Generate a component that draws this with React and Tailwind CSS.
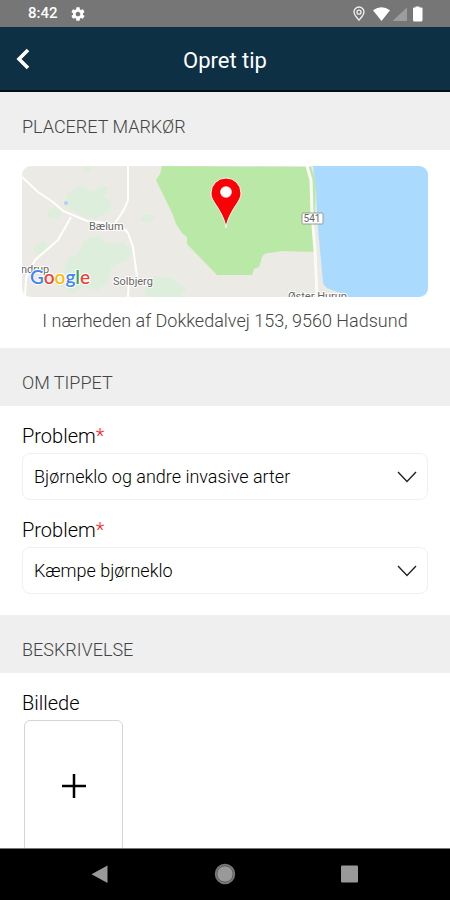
import React from "react";

function StatusBar() {
  return (
    <div className="flex h-[27px] shrink-0 items-center justify-between bg-[#767676] pr-[26px] pl-7 text-white">
      <div className="flex items-center gap-3">
        <span className="text-[15px] font-medium">8:42</span>
        <svg className="size-4" viewBox="0 0 24 24" fill="currentColor" aria-hidden="true">
          <path d="M19.43 12.98c.04-.32.07-.64.07-.98s-.03-.66-.07-.98l2.11-1.65c.19-.15.24-.42.12-.64l-2-3.46c-.12-.22-.39-.3-.61-.22l-2.49 1c-.52-.4-1.08-.73-1.69-.98l-.38-2.65C14.46 2.18 14.25 2 14 2h-4c-.25 0-.46.18-.49.42l-.38 2.65c-.61.25-1.17.59-1.69.98l-2.49-1c-.23-.09-.49 0-.61.22l-2 3.46c-.13.22-.07.49.12.64l2.11 1.65c-.04.32-.07.65-.07.98s.03.66.07.98l-2.11 1.65c-.19.15-.24.42-.12.64l2 3.46c.12.22.39.3.61.22l2.49-1c.52.4 1.08.73 1.69.98l.38 2.65c.03.24.24.42.49.42h4c.25 0 .46-.18.49-.42l.38-2.65c.61-.25 1.17-.59 1.69-.98l2.49 1c.23.09.49 0 .61-.22l2-3.46c.12-.22.07-.49-.12-.64l-2.11-1.65zM12 15.5c-1.93 0-3.5-1.57-3.5-3.5s1.57-3.5 3.5-3.5 3.5 1.57 3.5 3.5-1.57 3.5-3.5 3.5z" />
        </svg>
      </div>
      <svg className="h-4 w-[71px]" viewBox="0 0 71 16" fill="none" aria-hidden="true">
        <path d="M6 14.2C3.500 11 1 8.800 1 6a5 5 0 0 1 10 0c0 2.800-2.500 5-5 8.200Z" stroke="#f2f2f2" strokeWidth="1.300" />
        <circle cx="6" cy="6.200" r="2" stroke="#f2f2f2" strokeWidth="1.300" />
        <path d="M20 4.200Q28.500-1.600 37 4.200L28.500 15Z" fill="#fff" />
        <path d="M54 1.500V15H39.500Z" fill="#9d9d9d" />
        <path d="M62.500 1.500V.5h4v1h2q1 0 1 1V14q0 1.500-1.500 1.500h-6.500Q60 15.500 60 14V2.500q0-1 1-1Z" fill="#fff" />
      </svg>
    </div>
  );
}

function Header() {
  return (
    <header className="grid h-[65px] shrink-0 grid-cols-[48px_1fr_48px] items-center border-b-2 border-[#020d18] bg-[#0d3045] text-white">
      <button type="button" aria-label="Tilbage" className="flex h-full items-center pl-4">
        <svg className="h-[22px] w-4" viewBox="0 0 16 22" fill="none" aria-hidden="true">
          <path d="M12 2 3 11l9 9" stroke="currentColor" strokeWidth="3.600" />
        </svg>
      </button>
      <h1 className="pt-1 text-center text-[22px] leading-7">Opret tip</h1>
    </header>
  );
}

function SectionTitle({ children }) {
  return (
    <h2 className="flex h-[58px] items-center bg-[#efefef] px-[22px] pt-3 text-lg font-light text-[#444]">
      {children}
    </h2>
  );
}

function MapPreview() {
  return (
    <svg
      className="h-[131px] w-full rounded-[9px]"
      viewBox="0 0 406 131"
      preserveAspectRatio="xMidYMid slice"
      role="img"
      aria-label="Kort"
      fontFamily="Roboto, sans-serif"
    >
      <rect width="406" height="131" fill="#ebeae5" />
      <g fill="#deeedd">
        <path d="m44 28 15-9 12 7 7-6 8 1-4 10 8 5-3 10-14 7-13-3-15-9Z" />
        <path d="m64 73 13-4 6 7 20 1 8 8-5 9-17 7-2 14-11 9-14-3-11 6-15-8 6-12 4-15 9-4Z" />
        <path d="m132 110 18 2 14 11-6 8h-34l-1-9Z" />
        <path d="m120 50 8-2 5 4-7 5-8-2ZM61 1h9l-4 5-5-1ZM24 45l10-4 7 4-5 8-9-2ZM13 80l9-5 5 5-7 8-8-2Z" />
      </g>
      <circle cx="44" cy="37" r="2" fill="#a9d4fa" />
      <path d="m140 0-2 8-4 6 17 35 3 9 6 9 5 4v7l30 31h35l2-6 5-2 2-6q1-8 8-8l13-2 32 1 2-71-5-14Z" fill="#bae8a6" />
      <path d="M291 0h115v131h-81l-6-4-9-3q-9-3-9-8l-3-32-3-33-1-27Z" fill="#abdaff" />
      <g fill="none" stroke="#fff">
        <path d="m0 11 16 15 15 10 10 9 24 10 26 3q12 4 15 9l5 14 4 30M106 0v34q-3 10-13 23M49 51 36 74 13 94 4 112l-1 19M107 113l-1 18" strokeWidth="2" />
        <path d="m285 0 4 14 1 33 3 38 2 46" strokeWidth="3" stroke="#fbfaf4" />
      </g>
      <g fontSize="11" fill="#666" stroke="#fff" strokeWidth="2" strokeLinejoin="round" paintOrder="stroke">
        <text x="67" y="64">Bælum</text>
        <text x="91" y="119">Solbjerg</text>
        <text x="-1" y="107">ndrup</text>
        <text x="266" y="134">Øster Hurup</text>
      </g>
      <rect x="280" y="47" width="21" height="11" rx="1" fill="#fff" stroke="#999" />
      <text x="290" y="56" fontSize="10" textAnchor="middle" fill="#666">541</text>
      <text x="8" y="118" fontSize="19" fontWeight="600" fontFamily="Lato, sans-serif" stroke="#fff" strokeWidth="2" paintOrder="stroke">
        <tspan fill="#4285f4">G</tspan>
        <tspan fill="#ea4335">o</tspan>
        <tspan fill="#fbbc05">o</tspan>
        <tspan fill="#4285f4">g</tspan>
        <tspan fill="#34a853">l</tspan>
        <tspan fill="#ea4335">e</tspan>
      </text>
      <path d="M204 62c-1-8-4-13-8-20-4-6-7-10-7-15a15 15 0 0 1 30 0c0 5-3 9-7 15-4 7-7 12-8 20Z" fill="#fa0007" stroke="#f5fff0" strokeWidth="1" />
      <circle cx="204" cy="26" r="5.800" fill="#fff" />
    </svg>
  );
}

function SelectField({ id, option }) {
  return (
    <div className="flex flex-col">
      <label htmlFor={id} className="text-xl leading-6 font-light text-black">
        Problem<span className="text-[#ff1a1a]">*</span>
      </label>
      <div className="mt-[5px] grid items-center">
        <select
          id={id}
          className="col-start-1 row-start-1 h-[47px] w-full appearance-none rounded-lg border border-[#f0f0f0] bg-white px-[11px] text-lg font-light text-black"
        >
          <option>{option}</option>
        </select>
        <svg
          className="pointer-events-none col-start-1 row-start-1 mr-[11px] h-3 w-5 justify-self-end"
          viewBox="0 0 20 12"
          fill="none"
          aria-hidden="true"
        >
          <path d="m1 1 9 9.500L19 1" stroke="#222" strokeWidth="1.400" />
        </svg>
      </div>
    </div>
  );
}

function NavBar() {
  return (
    <nav className="flex h-[52px] shrink-0 items-center justify-center gap-[100px] border-t border-[#777] bg-black pb-0.5 text-[#999]">
      <button type="button" aria-label="Tilbage">
        <svg className="size-6" viewBox="0 0 24 24" fill="currentColor" aria-hidden="true">
          <path d="M18.500 3.500v17.500L2.500 12.200Z" />
        </svg>
      </button>
      <button type="button" aria-label="Hjem">
        <svg className="size-6" viewBox="0 0 24 24" aria-hidden="true">
          <circle cx="12" cy="12" r="9.500" fill="#999" stroke="#777" strokeWidth="1.500" />
          <circle cx="12" cy="12" r="8.200" fill="none" stroke="#444" strokeWidth=".8" />
        </svg>
      </button>
      <button type="button" aria-label="Seneste">
        <svg className="size-6" viewBox="0 0 24 24" fill="currentColor" aria-hidden="true">
          <rect x="4" y="3.500" width="17" height="17" rx="1" />
        </svg>
      </button>
    </nav>
  );
}

export default function App() {
  return (
    <div className="flex h-screen flex-col overflow-hidden bg-white font-['Roboto',sans-serif]">
      <StatusBar />
      <Header />
      <main className="min-h-0 flex-1 overflow-hidden">
        <section>
          <SectionTitle>PLACERET MARKØR</SectionTitle>
          <div className="px-[22px] pt-4 pb-[15px]">
            <MapPreview />
            <p className="mt-3 text-center text-lg leading-6 font-light text-[#444]">
              I nærheden af Dokkedalvej 153, 9560 Hadsund
            </p>
          </div>
        </section>
        <section>
          <SectionTitle>OM TIPPET</SectionTitle>
          <div className="flex flex-col gap-[18px] px-[22px] pt-[18px] pb-[21px]">
            <SelectField id="category" option="Bjørneklo og andre invasive arter" />
            <SelectField id="species" option="Kæmpe bjørneklo" />
          </div>
        </section>
        <section>
          <SectionTitle>BESKRIVELSE</SectionTitle>
          <div className="px-[22px] pt-[18px]">
            <h3 className="text-xl leading-6 font-light text-black">Billede</h3>
            <button
              type="button"
              aria-label="Tilføj billede"
              className="mt-[5px] ml-0.5 flex h-[132px] w-[99px] items-center justify-center rounded-md border border-[#d5d5d5]"
            >
              <svg className="size-[26px]" viewBox="0 0 26 26" aria-hidden="true">
                <path d="M13 1v24M1 13h24" stroke="#000" strokeWidth="2.500" />
              </svg>
            </button>
          </div>
        </section>
      </main>
      <NavBar />
    </div>
  );
}
